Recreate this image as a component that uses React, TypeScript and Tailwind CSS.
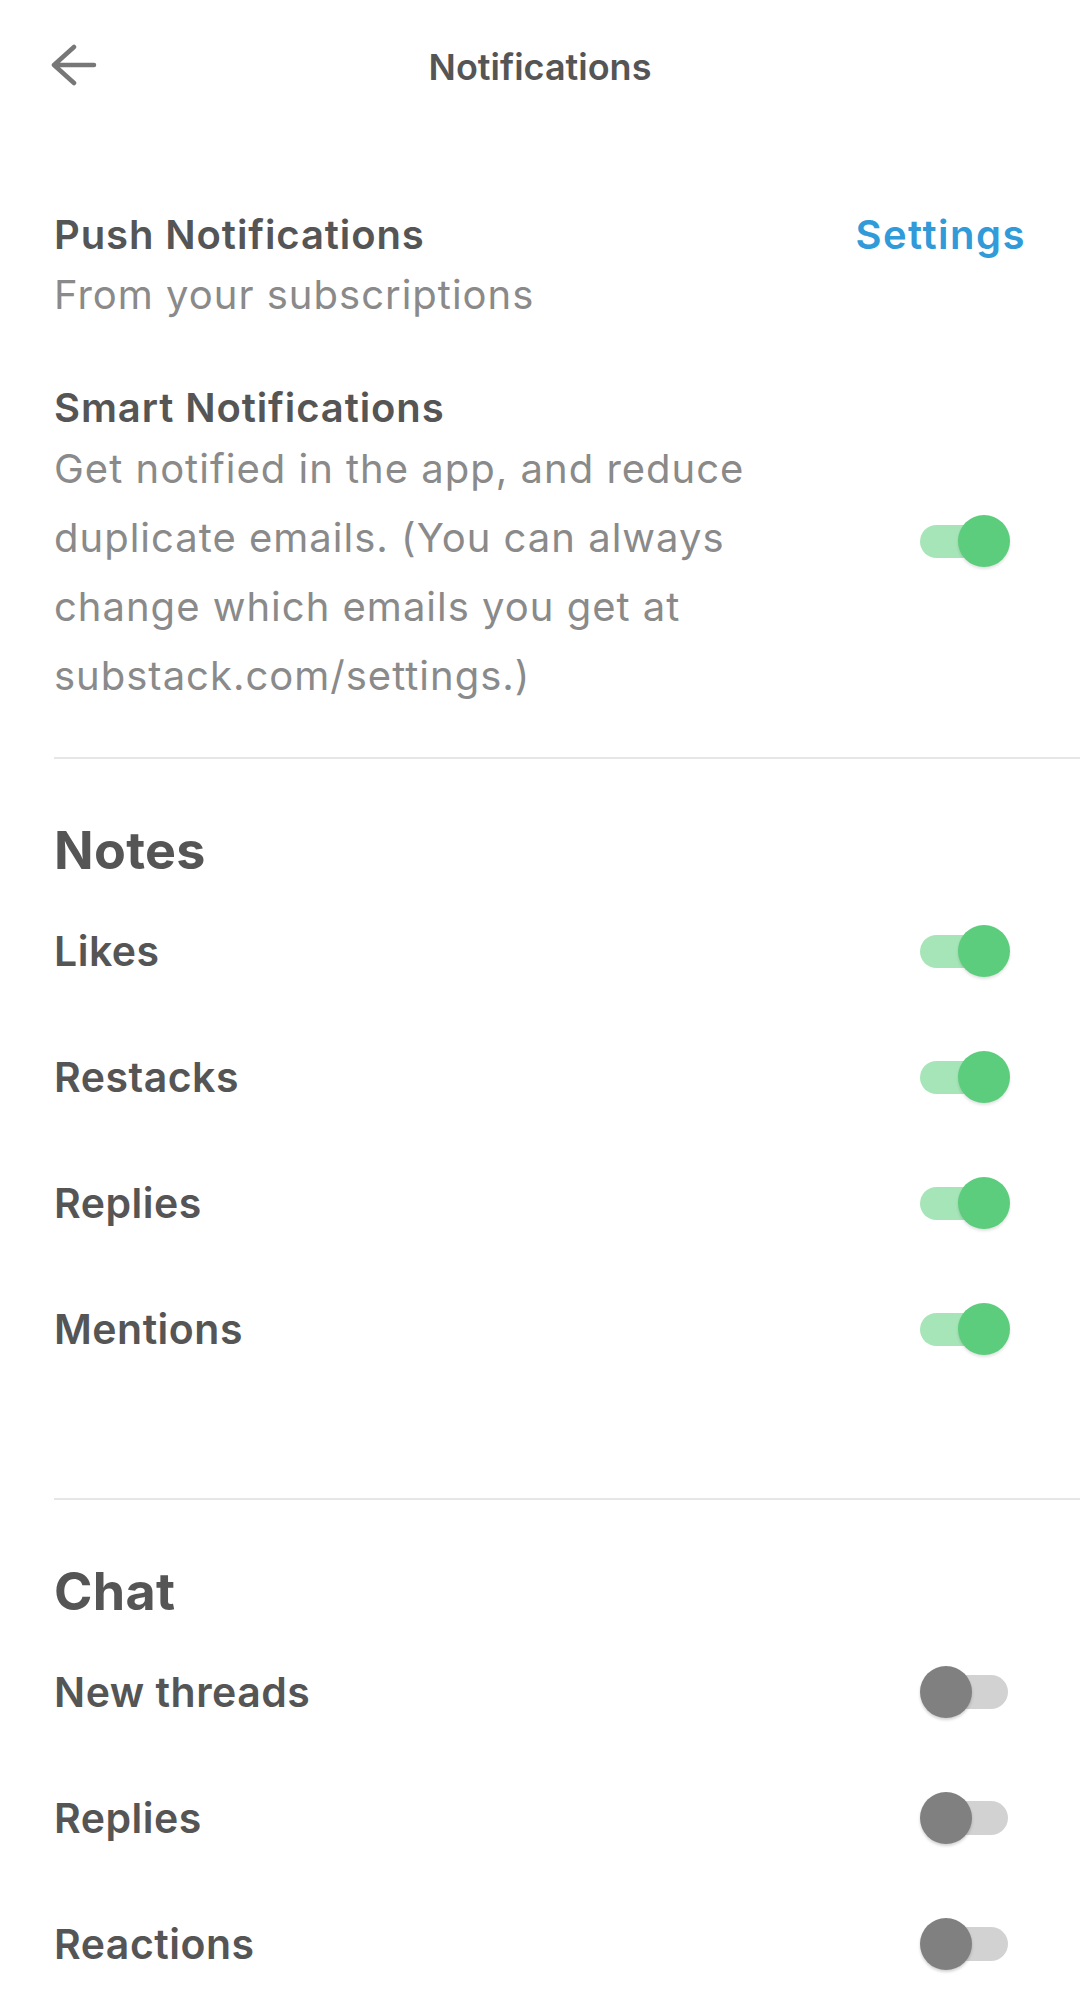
const NOTES_ROWS = [
  { label: "Likes", on: true },
  { label: "Restacks", on: true },
  { label: "Replies", on: true },
  { label: "Mentions", on: true },
];

const CHAT_ROWS = [
  { label: "New threads", on: false },
  { label: "Replies", on: false },
  { label: "Reactions", on: false },
];

function Toggle({ on }: { on: boolean }) {
  return (
    <div className="relative mr-[16px] h-[54px] w-[90px] shrink-0">
      <div
        className={
          on
            ? "absolute left-0 right-[4px] top-[11px] h-[33px] rounded-full bg-[#a6e5b8]"
            : "absolute left-[6px] right-[2px] top-[10px] h-[34px] rounded-full bg-[#d2d2d2]"
        }
      />
      <div
        className={
          on
            ? "absolute right-0 top-[1px] h-[52px] w-[52px] rounded-full bg-[#5bcd7c] shadow-[0_2px_3px_rgba(0,0,0,0.12)]"
            : "absolute left-0 top-[1px] h-[52px] w-[52px] rounded-full bg-[#808080] shadow-[0_2px_3px_rgba(0,0,0,0.18)]"
        }
      />
    </div>
  );
}

function Row({ label, on }: { label: string; on: boolean }) {
  return (
    <div className="flex h-[126px] items-center justify-between">
      <span className="text-[41px] font-semibold leading-[50px] tracking-[0.5px] text-[#555555]">
        {label}
      </span>
      <Toggle on={on} />
    </div>
  );
}

function Section({
  title,
  rows,
}: {
  title: string;
  rows: { label: string; on: boolean }[];
}) {
  return (
    <section className="px-[54px]">
      <h2 className="mt-[60px] text-[52px] font-bold leading-[64px] tracking-[0.3px] text-[#555555]">
        {title}
      </h2>
      <div className="mt-[5px]">
        {rows.map((row) => (
          <Row key={row.label} label={row.label} on={row.on} />
        ))}
      </div>
    </section>
  );
}

export default function App() {
  return (
    <div
      className="min-h-[2010px] w-[1080px] bg-white"
      style={{ fontFamily: "Inter, 'Noto Sans', sans-serif" }}
    >
      <header className="relative flex h-[134px] items-center justify-center">
        <button className="absolute left-[50px] top-[44px]" type="button">
          <svg width="48" height="44" viewBox="0 0 48 44" fill="none">
            <path
              d="M24 3 L4 21 L24 39 M4 21 H44"
              stroke="#777777"
              strokeWidth="4.5"
              strokeLinecap="round"
              strokeLinejoin="round"
            />
          </svg>
        </button>
        <h1 className="text-[36px] font-semibold text-[#555555]">
          Notifications
        </h1>
      </header>

      <div className="px-[54px] pt-[71px]">
        <div className="flex items-start justify-between">
          <div>
            <p className="text-[40px] font-semibold leading-[60px] tracking-[0.9px] text-[#555555]">
              Push Notifications
            </p>
            <p className="text-[40px] leading-[60px] tracking-[1px] text-[#8a8a8a]">
              From your subscriptions
            </p>
          </div>
          <button
            className="text-[40px] font-semibold leading-[60px] tracking-[1.5px] text-[#319bd9]"
            type="button"
          >
            Settings
          </button>
        </div>

        <div className="mt-[57px] flex items-center justify-between">
          <div className="w-[760px]">
            <p className="text-[40px] font-semibold leading-[52px] tracking-[0.9px] text-[#555555]">
              Smart Notifications
            </p>
            <p className="text-[40px] leading-[69px] tracking-[1px] text-[#8a8a8a]">
              Get notified in the app, and reduce duplicate emails. (You can
              always change which emails you get at substack.com/settings.)
            </p>
          </div>
          <div className="mb-[10px]">
            <Toggle on />
          </div>
        </div>
      </div>

      <div className="ml-[54px] mt-[47px] h-[2px] bg-[#e6e6e6]" />
      <Section title="Notes" rows={NOTES_ROWS} />

      <div className="ml-[54px] mt-[106px] h-[2px] bg-[#e6e6e6]" />
      <Section title="Chat" rows={CHAT_ROWS} />
    </div>
  );
}
